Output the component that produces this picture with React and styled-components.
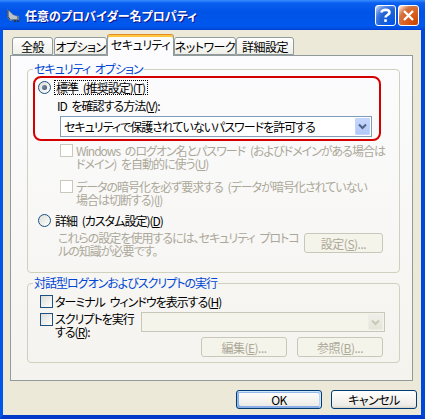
import React from 'react';
import styled, { createGlobalStyle } from 'styled-components';

const Global = createGlobalStyle`
  html, body { margin: 0; padding: 0; background: #fff; }
  body { font-family: "Noto Sans CJK JP", "Noto Sans", sans-serif; font-size: 12px; color: #000; }
  * { box-sizing: border-box; }
`;

const Window = styled.div`
  width: 425px;
  height: 419px;
  display: flex;
  flex-direction: column;
  overflow: hidden;
  font-feature-settings: "palt";
  letter-spacing: -1px;
  word-spacing: 3px;
`;

const TitleBar = styled.div`
  height: 30px;
  flex: none;
  display: flex;
  align-items: center;
  padding: 0 6px 0 5px;
  background: linear-gradient(180deg, #3a8dff 0%, #0a5ff0 10%, #0053e6 40%, #0058ee 85%, #0050e0 94%, #003dd7 100%);
`;

const TitleIcon = styled.svg`
  width: 16px;
  height: 16px;
  flex: none;
`;

const Title = styled.div`
  flex: 1;
  margin-left: 4px;
  color: #fff;
  font-weight: bold;
  font-size: 12px;
  letter-spacing: 0;
  text-shadow: 1px 1px #0f1089;
  white-space: nowrap;
`;

const CtlButton = styled.div`
  width: 21px;
  height: 21px;
  margin-left: 2px;
  border: 1px solid #fff;
  border-radius: 3px;
  display: flex;
  align-items: center;
  justify-content: center;
  background: ${p => p.$close
    ? 'radial-gradient(circle at 90% 90%, #cc4600 0, #dc6527 55%, #cd7546 70%, #ffccb2 90%, #fff 100%)'
    : 'radial-gradient(circle at 90% 90%, #0054e9 0, #2263d5 55%, #4479e4 70%, #a3bbec 90%, #fff 100%)'};
`;

const Frame = styled.div`
  flex: 1;
  display: flex;
  flex-direction: column;
  background: #ece9d8;
  border-left: 3px solid #0056ea;
  border-right: 4px solid #0048dd;
  border-bottom: 4px solid #0038c8;
  padding: 4px 6px 0 7px;
`;

const TabStrip = styled.div`
  height: 22px;
  display: flex;
  align-items: flex-end;
  padding-left: 2px;
  margin-bottom: -1px;
  position: relative;
  z-index: 1;
`;

const Tab = styled.div`
  width: ${p => p.$w}px;
  margin-right: ${p => p.$gap || 0}px;
  height: ${p => (p.$active ? 22 : 18)}px;
  margin-bottom: ${p => (p.$active ? 0 : 1)}px;
  border: 1px solid #919b9c;
  border-bottom: ${p => (p.$active ? 'none' : '1px solid #919b9c')};
  border-top-color: ${p => (p.$active ? '#e68b2c' : '#919b9c')};
  border-radius: 3px 3px 0 0;
  background: ${p => (p.$active
    ? '#fcfcfe'
    : 'linear-gradient(180deg, #fff, #fafaf9 26%, #f0f0ea 95%, #ecebe6)')};
  box-shadow: ${p => (p.$active ? 'inset 0 2px #ffc83c' : 'none')};
  display: flex;
  align-items: center;
  justify-content: center;
  padding-top: ${p => (p.$active ? 0 : 1)}px;
  padding-bottom: ${p => (p.$active ? 2 : 0)}px;
  white-space: nowrap;
  font-size: 12px;
  letter-spacing: -0.5px;
`;

const Panel = styled.div`
  height: 326px;
  flex: none;
  margin-right: 2px;
  border: 1px solid #919b9c;
  background: linear-gradient(180deg, #fcfcfe, #f4f3ee);
  padding: 6px 12px 0 16px;
  display: flex;
  flex-direction: column;
`;

const Group = styled.fieldset`
  margin: ${p => p.$mt || 0}px 0 0 0;
  border: 1px solid #d0d0bf;
  border-radius: 4px;
  padding: 0 ${p => p.$pr}px ${p => p.$pb}px ${p => p.$pl}px;
  display: flex;
  flex-direction: column;
  min-width: 0;
`;

const Legend = styled.legend`
  color: #0046d5;
  line-height: 14px;
  padding: 0 1px;
  margin-left: ${p => p.$ml}px;
  white-space: nowrap;
`;

const Highlight = styled.div`
  margin: 0 2px 0 -5px;
  border: 2px solid #d40000;
  border-radius: 8px;
  padding: 2px 7px 2px 3px;
  display: flex;
  flex-direction: column;
`;

const Row = styled.div`
  display: flex;
  align-items: ${p => p.$align || 'center'};
  margin-top: ${p => p.$mt || 0}px;
  padding-left: ${p => p.$pl || 0}px;
  height: ${p => (p.$h ? `${p.$h}px` : 'auto')};
  line-height: 13px;
  white-space: nowrap;
  color: ${p => (p.$disabled ? '#aca899' : '#000')};
`;

const Radio = styled.span`
  width: 13px;
  height: 13px;
  flex: none;
  border-radius: 50%;
  border: 1px solid #1c5180;
  background: linear-gradient(135deg, #dcdcd7, #fff);
  display: flex;
  align-items: center;
  justify-content: center;
  &::after {
    content: "";
    display: ${p => (p.$checked ? 'block' : 'none')};
    width: 5px;
    height: 5px;
    border-radius: 50%;
    background: radial-gradient(circle at 35% 35%, #7d8ba3, #3b4e6e);
  }
`;

const Check = styled.span`
  width: 13px;
  height: 13px;
  flex: none;
  margin-top: ${p => p.$mt || 0}px;
  border: 1px solid ${p => (p.$disabled ? '#cac8bb' : '#1c5180')};
  background: ${p => (p.$disabled ? '#fff' : 'linear-gradient(135deg, #dcdcd7, #fff)')};
`;

const Label = styled.span`
  margin-left: ${p => p.$ml || 3}px;
  margin-top: ${p => p.$mt || 0}px;
  line-height: 13px;
  white-space: nowrap;
`;

const Focus = styled.span`
  margin-left: 3px;
  height: 15px;
  line-height: 13px;
  padding: 0 2px 0 1px;
  border: 1px dotted #000;
  white-space: nowrap;
`;

const Combo = styled.div`
  height: ${p => p.$h}px;
  width: ${p => (p.$w ? `${p.$w}px` : 'auto')};
  margin-top: ${p => p.$mt || 0}px;
  margin-left: ${p => (p.$ml === 'auto' ? 'auto' : `${p.$ml || 0}px`)};
  border: 1px solid ${p => (p.$disabled ? '#c9c7ba' : '#7f9db9')};
  background: ${p => (p.$disabled ? '#f5f4ea' : '#fff')};
  display: flex;
  align-items: center;
  padding: 1px 1px 1px 3px;
`;

const ComboText = styled.span`
  flex: 1;
  white-space: nowrap;
  line-height: 13px;
`;

const ComboBtn = styled.span`
  width: 15px;
  height: 100%;
  flex: none;
  border-radius: 1px;
  display: flex;
  align-items: center;
  justify-content: center;
  background: ${p => (p.$disabled
    ? 'linear-gradient(180deg, #f0efe8, #e6e4d8)'
    : 'linear-gradient(180deg, #c6d7fc, #b2c8f7)')};
  border: 1px solid ${p => (p.$disabled ? '#eeede5' : '#c1d3fb')};
`;

const Desc = styled.div`
  display: flex;
  justify-content: space-between;
  align-items: flex-start;
  margin-top: 3px;
  padding-left: 20px;
  color: #aca899;
  line-height: 13px;
  white-space: nowrap;
`;

const Button = styled.button`
  width: ${p => p.$w}px;
  height: ${p => p.$h}px;
  flex: none;
  margin-top: ${p => p.$mt || 0}px;
  padding: 0;
  font-family: inherit;
  font-feature-settings: "palt";
  letter-spacing: -0.5px;
  font-size: 12px;
  line-height: 13px;
  color: #000;
  border: 1px solid #003c74;
  border-radius: 3px;
  background: linear-gradient(180deg, #fff, #f3f2ee 60%, #ecebe6 86%, #d6d0c5);
  box-shadow: ${p => (p.$default
    ? 'inset -1px 1px #cee7ff, inset 1px 2px #98b8ea, inset -2px 2px #bcd4f6, inset 1px -1px #89ade4, inset 2px -2px #89ade4'
    : 'none')};
  &:disabled {
    color: #aca899;
    border-color: #c9c7ba;
    background: #f5f4ea;
  }
`;

const ButtonRow = styled.div`
  display: flex;
  justify-content: flex-end;
  gap: ${p => p.$gap}px;
  margin-top: ${p => p.$mt || 0}px;
  margin-right: ${p => p.$mr || 0}px;
`;

const Chevron = ({ color }) => (
  <svg width="9" height="7" viewBox="0 0 9 7">
    <path d="M1 1.5 L4.5 5 L8 1.5" fill="none" stroke={color} strokeWidth="2" />
  </svg>
);

export default function App() {
  return (
    <>
      <Global />
      <Window>
        <TitleBar>
          <TitleIcon viewBox="0 0 16 16">
            <path d="M2 2 L9 8 L14 9 L14 13 L9 13 L5 14 L2 10 Z" fill="#6b7b8c" />
            <path d="M3 3 L8 8 L12 9.5 L12 12 L8 12 L5 12.5 L3 9.5 Z" fill="#b9c2cc" />
            <path d="M3 3 L3 9.5 L5 12.5" fill="none" stroke="#2a3848" strokeWidth="1" />
            <rect x="9" y="13" width="2" height="2" fill="#2a3848" />
            <rect x="12" y="13" width="2" height="2" fill="#2a3848" />
          </TitleIcon>
          <Title>任意のプロバイダー名プロパティ</Title>
          <CtlButton>
            <svg width="13" height="15" viewBox="0 0 13 15">
              <path d="M2.5 4.5 C2.5 1 10.5 1 10.5 4.5 C10.5 7 6.5 7 6.5 9.5" fill="none" stroke="#fff" strokeWidth="2.6" />
              <rect x="5.2" y="11.3" width="2.6" height="2.6" fill="#fff" />
            </svg>
          </CtlButton>
          <CtlButton $close>
            <svg width="13" height="13" viewBox="0 0 13 13">
              <path d="M2 2 L11 11 M11 2 L2 11" stroke="#fff" strokeWidth="2.4" />
            </svg>
          </CtlButton>
        </TitleBar>
        <Frame>
          <TabStrip>
            <Tab $w={41} $gap={1}>全般</Tab>
            <Tab $w={53}>オプション</Tab>
            <Tab $w={67} $active>セキュリティ</Tab>
            <Tab $w={62}>ネットワーク</Tab>
            <Tab $w={58}>詳細設定</Tab>
          </TabStrip>
          <Panel>
            <Group $pl={10} $pr={16} $pb={15}>
              <Legend $ml={-5}>セキュリティ オプション</Legend>
              <Highlight>
                <Row $h={15}>
                  <Radio $checked />
                  <Focus>標準 (推奨設定)(<u>T</u>)</Focus>
                </Row>
                <Row $mt={3} $h={14} $pl={19}>ID を確認する方法(<u>V</u>):</Row>
                <Combo $h={21} $mt={4} $ml={22}>
                  <ComboText>セキュリティで保護されていないパスワードを許可する</ComboText>
                  <ComboBtn><Chevron color="#4d6185" /></ComboBtn>
                </Combo>
              </Highlight>
              <Row $mt={3} $pl={22} $align="flex-start" $disabled>
                <Check $disabled />
                <Label>
                  Windows のログオン名とパスワード (およびドメインがある場合は<br />
                  ドメイン) を自動的に使う(<u>U</u>)
                </Label>
              </Row>
              <Row $mt={10} $pl={22} $align="flex-start" $disabled>
                <Check $disabled />
                <Label>
                  データの暗号化を必ず要求する (データが暗号化されていない<br />
                  場合は切断する)(<u>I</u>)
                </Label>
              </Row>
              <Row $mt={7} $h={15}>
                <Radio />
                <Label $ml={4}>詳細 (カスタム設定)(<u>D</u>)</Label>
              </Row>
              <Desc>
                <span>
                  これらの設定を使用するには、セキュリティ プロトコ<br />
                  ルの知識が必要です。
                </span>
                <Button $w={79} $h={20} $mt={2} disabled>設定(<u>S</u>)...</Button>
              </Desc>
            </Group>
            <Group $mt={3} $pl={12} $pr={14} $pb={5}>
              <Legend $ml={-7}>対話型ログオンおよびスクリプトの実行</Legend>
              <Row $mt={5} $h={13}>
                <Check />
                <Label $ml={2}>ターミナル ウィンドウを表示する(<u>H</u>)</Label>
              </Row>
              <Row $mt={4} $align="flex-start">
                <Check $mt={1} />
                <Label $ml={2}>
                  スクリプトを実行<br />
                  する(<u>R</u>):
                </Label>
                <Combo $h={20} $w={244} $ml="auto" $disabled>
                  <ComboText />
                  <ComboBtn $disabled><Chevron color="#c9c7ba" /></ComboBtn>
                </Combo>
              </Row>
              <ButtonRow $gap={10} $mr={2} $mt={-1}>
                <Button $w={86} $h={20} disabled>編集(<u>E</u>)...</Button>
                <Button $w={86} $h={20} disabled>参照(<u>B</u>)...</Button>
              </ButtonRow>
            </Group>
          </Panel>
          <ButtonRow $gap={9} $mt={9} $mr={-2}>
            <Button $w={86} $h={19} $default>OK</Button>
            <Button $w={86} $h={19}>キャンセル</Button>
          </ButtonRow>
        </Frame>
      </Window>
    </>
  );
}
